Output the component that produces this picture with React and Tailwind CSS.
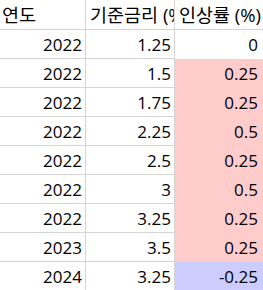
import React from 'react'

const rows = [
    { year: '2022', rate: '1.25', diff: '0', fill: '' },
    { year: '2022', rate: '1.5', diff: '0.25', fill: 'up' },
    { year: '2022', rate: '1.75', diff: '0.25', fill: 'up' },
    { year: '2022', rate: '2.25', diff: '0.5', fill: 'up' },
    { year: '2022', rate: '2.5', diff: '0.25', fill: 'up' },
    { year: '2022', rate: '3', diff: '0.5', fill: 'up' },
    { year: '2022', rate: '3.25', diff: '0.25', fill: 'up' },
    { year: '2023', rate: '3.5', diff: '0.25', fill: 'up' },
    { year: '2024', rate: '3.25', diff: '-0.25', fill: 'down' },
]

const fills = {
    up: 'bg-[#ffcccc] border-[#ffcccc]',
    down: 'bg-[#ccccff] border-[#ccccff]',
}

const App = () => {
    return (
        <div
            className="w-[263px] h-[290px] overflow-hidden bg-white text-black text-[17px] leading-[20px]"
            style={{ fontFamily: '"Open Sans", "Noto Sans CJK KR", sans-serif' }}
        >
            <div className="grid grid-cols-[86px_89px_88px]">
                <div className="h-[30px] flex items-end pb-[4px] pl-[2px] text-[18.5px] border-b border-r border-[#d4d4d4] overflow-hidden whitespace-nowrap">연도</div>
                <div className="h-[30px] flex items-end pb-[4px] pl-[4px] text-[18.5px] border-b border-r border-[#d4d4d4] overflow-hidden whitespace-nowrap">기준금리 (%)</div>
                <div className="h-[30px] flex items-end pb-[4px] pl-[4px] text-[18.5px] border-b border-[#d4d4d4] overflow-hidden whitespace-nowrap">인상률 (%)</div>

                {rows.map((r, i) => (
                    <React.Fragment key={i}>
                        <div className="h-[29px] flex items-end justify-end pb-[3px] pr-[3px] border-b border-r border-[#d4d4d4]">{r.year}</div>
                        <div className="h-[29px] flex items-end justify-end pb-[3px] pr-[3px] border-b border-r border-[#d4d4d4]">{r.rate}</div>
                        <div className={`h-[29px] flex items-end justify-end pb-[3px] pr-[5px] ${r.fill ? fills[r.fill] : 'border-white'} border-b`}>{r.diff}</div>
                    </React.Fragment>
                ))}
            </div>
        </div>
    )
}

export default App
